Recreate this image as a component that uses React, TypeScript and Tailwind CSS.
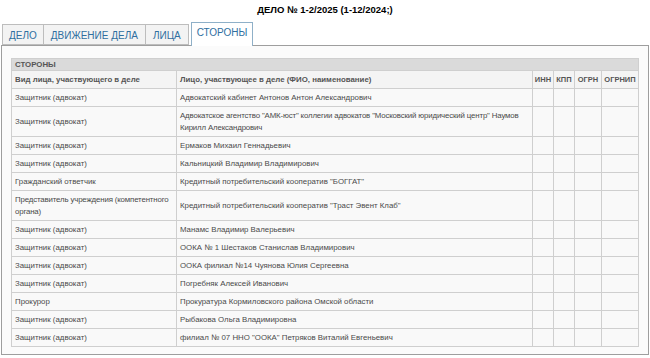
import React from 'react'

const tabs = [
  { label: 'ДЕЛО', active: false, pad: 'px-[6px]' },
  { label: 'ДВИЖЕНИЕ ДЕЛА', active: false, pad: 'px-[7px]' },
  { label: 'ЛИЦА', active: false, pad: 'px-[7px]' },
  { label: 'СТОРОНЫ', active: true, pad: 'px-[5px]' }
]

// '\n' marks where the reference breaks a long cell
const rows: [string, string][] = [
  ['Защитник (адвокат)', 'Адвокатский кабинет Антонов Антон Александрович'],
  [
    'Защитник (адвокат)',
    'Адвокатское агентство "АМК-юст" коллегии адвокатов "Московский юридический центр" Наумов\nКирилл Александрович'
  ],
  ['Защитник (адвокат)', 'Ермаков Михаил Геннадьевич'],
  ['Защитник (адвокат)', 'Кальницкий Владимир Владимирович'],
  ['Гражданский ответчик', 'Кредитный потребительский кооператив "БОГГАТ"'],
  ['Представитель учреждения (компетентного\nоргана)', 'Кредитный потребительский кооператив "Траст Эвент Клаб"'],
  ['Защитник (адвокат)', 'Манамс Владимир Валерьевич'],
  ['Защитник (адвокат)', 'ООКА № 1 Шестаков Станислав Владимирович'],
  ['Защитник (адвокат)', 'ООКА филиал №14 Чуянова Юлия Сергеевна'],
  ['Защитник (адвокат)', 'Погребняк Алексей Иванович'],
  ['Прокурор', 'Прокуратура Кормиловского района Омской области'],
  ['Защитник (адвокат)', 'Рыбакова Ольга Владимировна'],
  ['Защитник (адвокат)', 'филиал № 07 ННО "ООКА" Петряков Виталий Евгеньевич']
]

const cell = 'border border-[#cfcfcf] px-[3px] pt-[3px] pb-[2px] align-middle'
const head = `${cell} font-bold text-[#555]`
const small = 'border border-[#cfcfcf] px-0 pt-[3px] pb-[2px] align-middle font-bold text-[#555] text-center text-[7.5px]'

function Lines({ text }: { text: string }) {
  const parts = text.split('\n')
  if (parts.length === 1) return <>{text}</>
  return (
    <>
      {parts.map((p, i) => (
        <span key={i} className="block whitespace-nowrap tracking-[-0.15px]">
          {p}
        </span>
      ))}
    </>
  )
}

export default function App() {
  return (
    <div className="w-[650px] h-[358px] bg-white overflow-hidden font-['Liberation_Sans',Arial,sans-serif] text-[#4a4a4a]">
      {/* Title */}
      <div className="h-[24px] pt-[4px] text-center text-[9.5px] font-bold text-black leading-[11px]">
        ДЕЛО № 1-2/2025 (1-12/2024;)
      </div>

      {/* Tabs */}
      <div className="flex items-end pl-[2px] h-[21px] relative z-10">
        {tabs.map(({ label, active, pad }, i) => (
          <div
            key={label}
            className={
              active
                ? `ml-[2px] h-[24px] ${pad} pt-[4px] border border-b-0 border-[#8fb0c8] bg-white text-[10px] text-[#2f6f9f] leading-[12px] -mb-px`
                : `h-[21px] ${pad} pt-[5px] border border-[#bdbdbd] bg-[#f3f3f3] text-[10px] text-[#2f6f9f] leading-[12px] ${i > 0 ? 'border-l-0' : ''}`
            }
          >
            {label}
          </div>
        ))}
      </div>

      {/* Panel */}
      <div className="mx-[1px] h-[310px] border border-[#9e9e9e] bg-[#fbfbfb] px-[9px] pt-[12px]">
        <table className="w-full table-fixed border-collapse text-[7.85px] leading-[12px] bg-[#f9f9f9]">
          <colgroup>
            <col className="w-[165px]" />
            <col />
            <col className="w-[21px]" />
            <col className="w-[21px]" />
            <col className="w-[27px]" />
            <col className="w-[37px]" />
          </colgroup>
          <thead>
            <tr className="bg-[#dadada]">
              <th colSpan={6} className="border border-[#cfcfcf] px-[3px] py-0 leading-[11px] text-left font-bold text-[#555]">
                СТОРОНЫ
              </th>
            </tr>
            <tr className="bg-[#f4f4f4]">
              <th className={`${head} text-left`}>Вид лица, участвующего в деле</th>
              <th className={`${head} text-left`}>Лицо, участвующее в деле (ФИО, наименование)</th>
              <th className={small}>ИНН</th>
              <th className={small}>КПП</th>
              <th className={small}>ОГРН</th>
              <th className={small}>ОГРНИП</th>
            </tr>
          </thead>
          <tbody>
            {rows.map(([kind, name], i) => (
              <tr key={i}>
                <td className={cell}><Lines text={kind} /></td>
                <td className={cell}><Lines text={name} /></td>
                <td className={cell}></td>
                <td className={cell}></td>
                <td className={cell}></td>
                <td className={cell}></td>
              </tr>
            ))}
          </tbody>
        </table>
      </div>
    </div>
  )
}
